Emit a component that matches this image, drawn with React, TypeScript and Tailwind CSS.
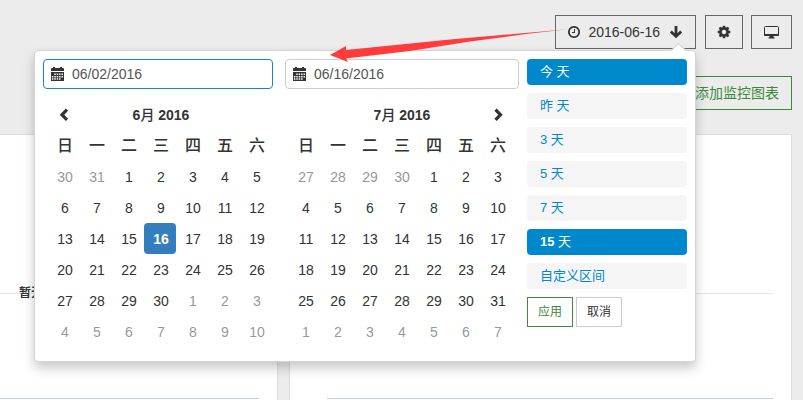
import { useState } from 'react';
import type { ReactNode } from 'react';

const WEEKDAYS = ['日', '一', '二', '三', '四', '五', '六'];
const RANGES = ['今 天', '昨 天', '3 天', '5 天', '7 天', '15 天', '自定义区间'];
const CJK = "font-['Liberation_Sans','Noto_Sans_CJK_SC',sans-serif]";

function ClockIcon() {
  return (
    <svg className="size-3" viewBox="128 128 1536 1536" fill="currentColor" aria-hidden="true">
      <path d="M1024 544v448q0 14-9 23t-23 9h-320q-14 0-23-9t-9-23v-64q0-14 9-23t23-9h224v-352q0-14 9-23t23-9h64q14 0 23 9t9 23zM1440 896q0-148-73-273t-198-198-273-73-273 73-198 198-73 273 73 273 198 198 273 73 273-73 198-198 73-273zM1664 896q0 209-103 385.5t-279.5 279.5-385.5 103-385.5-103-279.5-279.5-103-385.5 103-385.5 279.5-279.5 385.5-103 385.5 103 279.5 279.5 103 385.5z" />
    </svg>
  );
}

function ArrowDownIcon() {
  return (
    <svg className="size-[14px]" viewBox="0 0 14 14" aria-hidden="true">
      <path d="M7 1v10M1.8 6.4L7 11.4l5.200-5" fill="none" stroke="currentColor" strokeWidth="2.8" />
    </svg>
  );
}

function CogIcon() {
  return (
    <svg className="size-[14px]" viewBox="0 0 14 14" aria-hidden="true">
      <circle cx="7" cy="7" r="3.6" fill="none" stroke="currentColor" strokeWidth="2.7" />
      <g fill="currentColor">
        <path d="M5.500 2.600L5.900.7h2.200l.4 1.900zM5.500 11.400l.4 1.900h2.200l.4-1.900zM2.600 5.500L.7 5.900v2.200l1.900.4zM11.400 5.500l1.900.4v2.200l-1.900.4z" />
        <path
          d="M5.500 2.600L5.900.7h2.200l.4 1.900zM5.500 11.400l.4 1.900h2.200l.4-1.900zM2.600 5.500L.7 5.900v2.200l1.900.4zM11.400 5.500l1.900.4v2.200l-1.900.4z"
          transform="rotate(45 7 7)"
        />
      </g>
    </svg>
  );
}

function DesktopIcon() {
  return (
    <svg className="h-[14px] w-[15px]" viewBox="0 0 15 14" aria-hidden="true">
      <rect x="0.5" y="1.5" width="14" height="9" rx="1" fill="none" stroke="currentColor" />
      <path d="M0 9h15v1q0 1-1 1h-13q-1 0-1-1zM5.500 11h4v1l1 .5v1h-6v-1l1-.5z" fill="currentColor" />
    </svg>
  );
}

function CalendarIcon() {
  return (
    <svg className="h-[14px] w-[13px]" viewBox="0 0 13 14" fill="currentColor" aria-hidden="true">
      <path d="M0 4V2q0-1 1-1h1V0h2v1h5V0h2v1h1q1 0 1 1v2z" />
      <path d="M0 5h13v9H0z" />
      <path
        d="M3.300 6.500h1.500v1.500H3.300zM5.700 6.500h1.500v1.500H5.700zM8.100 6.500h1.500v1.500H8.100zM10.500 6.500h1.500v1.500h-1.500zM.9 8.900h1.500v1.500H.9zM3.300 8.900h1.500v1.500H3.300zM5.700 8.900h1.500v1.500H5.700zM8.100 8.900h1.500v1.500H8.100zM10.500 8.900h1.500v1.500h-1.500zM.9 11.300h1.500v1.500H.9zM3.300 11.300h1.500v1.500H3.300zM5.700 11.300h1.500v1.500H5.700zM8.100 11.300h1.500v1.500H8.100z"
        fill="#fff"
      />
    </svg>
  );
}

function Chevron({ d }: { d: string }) {
  return (
    <svg className="size-[14px]" viewBox="0 0 14 14" aria-hidden="true">
      <path d={d} fill="none" stroke="currentColor" strokeWidth="3.2" />
    </svg>
  );
}

function buildDays(lead: number[], count: number): { day: number; off: boolean }[] {
  const days = lead.map((day) => ({ day, off: true }));
  for (let day = 1; day <= count; day++) days.push({ day, off: false });
  for (let day = 1; days.length < 42; day++) days.push({ day, off: true });
  return days;
}

type CalendarProps = {
  label: string;
  value: string;
  title: string;
  days: { day: number; off: boolean }[];
  selected?: number;
  prev?: ReactNode;
  next?: ReactNode;
  focused?: boolean;
  tableClass: string;
};

function Calendar({ label, value, title, days, selected, prev, next, focused, tableClass }: CalendarProps) {
  const [text, setText] = useState(value);
  const weeks = Array.from({ length: 6 }, (_, i) => days.slice(i * 7, i * 7 + 7));
  return (
    <div>
      <label
        className={`flex h-[30px] items-center gap-2 rounded border bg-white pl-[7px] ${focused ? 'border-[#0f87c9]' : 'border-[#ccc]'}`}
      >
        <CalendarIcon />
        <input
          aria-label={label}
          value={text}
          onChange={(e) => setText(e.target.value)}
          className="min-w-0 flex-1 bg-transparent text-sm text-[#555] outline-none"
        />
      </label>
      <table className={`mt-[10px] w-[224px] table-fixed border-collapse text-center text-sm ${tableClass}`}>
        <thead>
          <tr className="h-[31px]">
            <th className="p-0">{prev}</th>
            <th colSpan={5} className="p-0 pl-0.5 font-bold">
              {title.split('月')[0]}
              <span className="font-medium">月</span>
              {title.split('月')[1]}
            </th>
            <th className="p-0 pl-0.5">{next}</th>
          </tr>
          <tr className="h-[31px]">
            {WEEKDAYS.map((d) => (
              <th key={d} className="p-0 pl-0.5 text-base leading-5 font-medium">
                {d}
              </th>
            ))}
          </tr>
        </thead>
        <tbody>
          {weeks.map((week, i) => (
            <tr key={i} className="h-[31px]">
              {week.map(({ day, off }) => (
                <td
                  key={day}
                  className={`p-0 pl-0.5 ${off ? 'text-[#999]' : ''} ${!off && day === selected ? 'rounded bg-[#357ebd] font-bold text-white' : ''}`}
                >
                  {day}
                </td>
              ))}
            </tr>
          ))}
        </tbody>
      </table>
    </div>
  );
}

export default function App() {
  const [active, setActive] = useState(['今 天', '15 天']);
  return (
    <div className={`relative flex min-h-screen flex-col overflow-hidden bg-[#ececec] text-sm leading-5 text-[#333] ${CJK}`}>
      <header className="flex flex-col items-end gap-[27px] px-[11px] pt-[15px] pb-6">
        <div className="flex">
          <div className="relative">
            <button className="flex h-[34px] items-center border border-[#666] px-3">
              <ClockIcon />
              <span className="pr-[9px] pl-2">2016-06-16</span>
              <ArrowDownIcon />
            </button>

            <div className="absolute top-[35px] right-0 z-10 flex rounded border border-[#d4d4d4] bg-white p-2 pb-[14px] shadow-[0_6px_12px_rgba(0,0,0,0.22)]">
              <span className="absolute -top-[6px] right-[11px] size-[11px] rotate-45 border-t border-l border-[#d4d4d4] bg-white" />
              <div className="mr-3 w-[230px]">
                <Calendar
                  label="开始日期"
                  value="06/02/2016"
                  title="6月 2016"
                  days={buildDays([30, 31], 30)}
                  selected={16}
                  focused
                  tableClass="ml-[5px]"
                  prev={
                    <button aria-label="上个月" className="flex w-full justify-center">
                      <Chevron d="M10 1.700L5 6.800l5 5.100" />
                    </button>
                  }
                />
              </div>
              <div className="mr-2 w-[234px]">
                <Calendar
                  label="结束日期"
                  value="06/16/2016"
                  title="7月 2016"
                  days={buildDays([27, 28, 29, 30], 31)}
                  tableClass="ml-1"
                  next={
                    <button aria-label="下个月" className="flex w-full justify-center">
                      <Chevron d="M4.500 1.700l5 5.100-5 5.100" />
                    </button>
                  }
                />
              </div>
              <div className="flex w-[160px] flex-col gap-2">
                {RANGES.map((r) => (
                  <button
                    key={r}
                    onClick={() => setActive([r])}
                    className={`h-[26px] rounded px-[13px] text-left text-[13px] leading-5 ${active.includes(r) ? 'bg-[#08c] text-white' : 'bg-[#f5f5f5] text-[#08c]'}`}
                  >
                    {r === '15 天' ? (
                      <>
                        <b>15</b> 天
                      </>
                    ) : (
                      r
                    )}
                  </button>
                ))}
                <div className="flex gap-[3px] text-xs">
                  <button className="h-[30px] w-[46px] border border-[#3a8a3a] text-[#3a8a3a]">应用</button>
                  <button className="h-[30px] w-[46px] border border-[#ccc]">取消</button>
                </div>
              </div>
            </div>
          </div>
          <button aria-label="设置" className="ml-[9px] flex h-[34px] w-[38px] items-center justify-center border border-[#666]">
            <CogIcon />
          </button>
          <button aria-label="全屏" className="ml-2 flex h-[34px] w-[41px] items-center justify-center border border-[#666]">
            <DesktopIcon />
          </button>
        </div>
        <button className="h-[34px] border border-[#3a8a3a] px-3 text-[#3a8a3a]">添加监控图表</button>
      </header>

      <main className="flex flex-1 gap-[11px] pr-[11px]">
        <section className="w-[278px] shrink-0 border-t border-r border-[#ddd] bg-white pt-[147px] pr-[18px]">
          <div className="flex h-[22px] items-center bg-[linear-gradient(#e5e5e5,#e5e5e5)] bg-[length:100%_1px] bg-center bg-no-repeat pl-[19px] text-xs font-bold">
            暂无
          </div>
          <hr className="mt-[94px] border-[#c3cfe0]" />
        </section>
        <section className="flex-1 border border-b-0 border-[#ddd] bg-white pt-[147px] pr-[18px] pl-[37px]">
          <div className="h-[22px] bg-[linear-gradient(#e5e5e5,#e5e5e5)] bg-[length:100%_1px] bg-center bg-no-repeat" />
          <hr className="mt-[94px] border-[#c3cfe0]" />
        </section>
      </main>

      <svg className="pointer-events-none absolute top-[25px] right-[233px] z-20 h-[40px] w-[240px]" viewBox="330 25 240 40" aria-hidden="true">
        <path d="M330 55L346 46V50L450 39.500L568 29.300L530 33.500L470 41.500L410 51L346 58.500L348 62Z" fill="#ff3b3b" />
      </svg>
    </div>
  );
}
